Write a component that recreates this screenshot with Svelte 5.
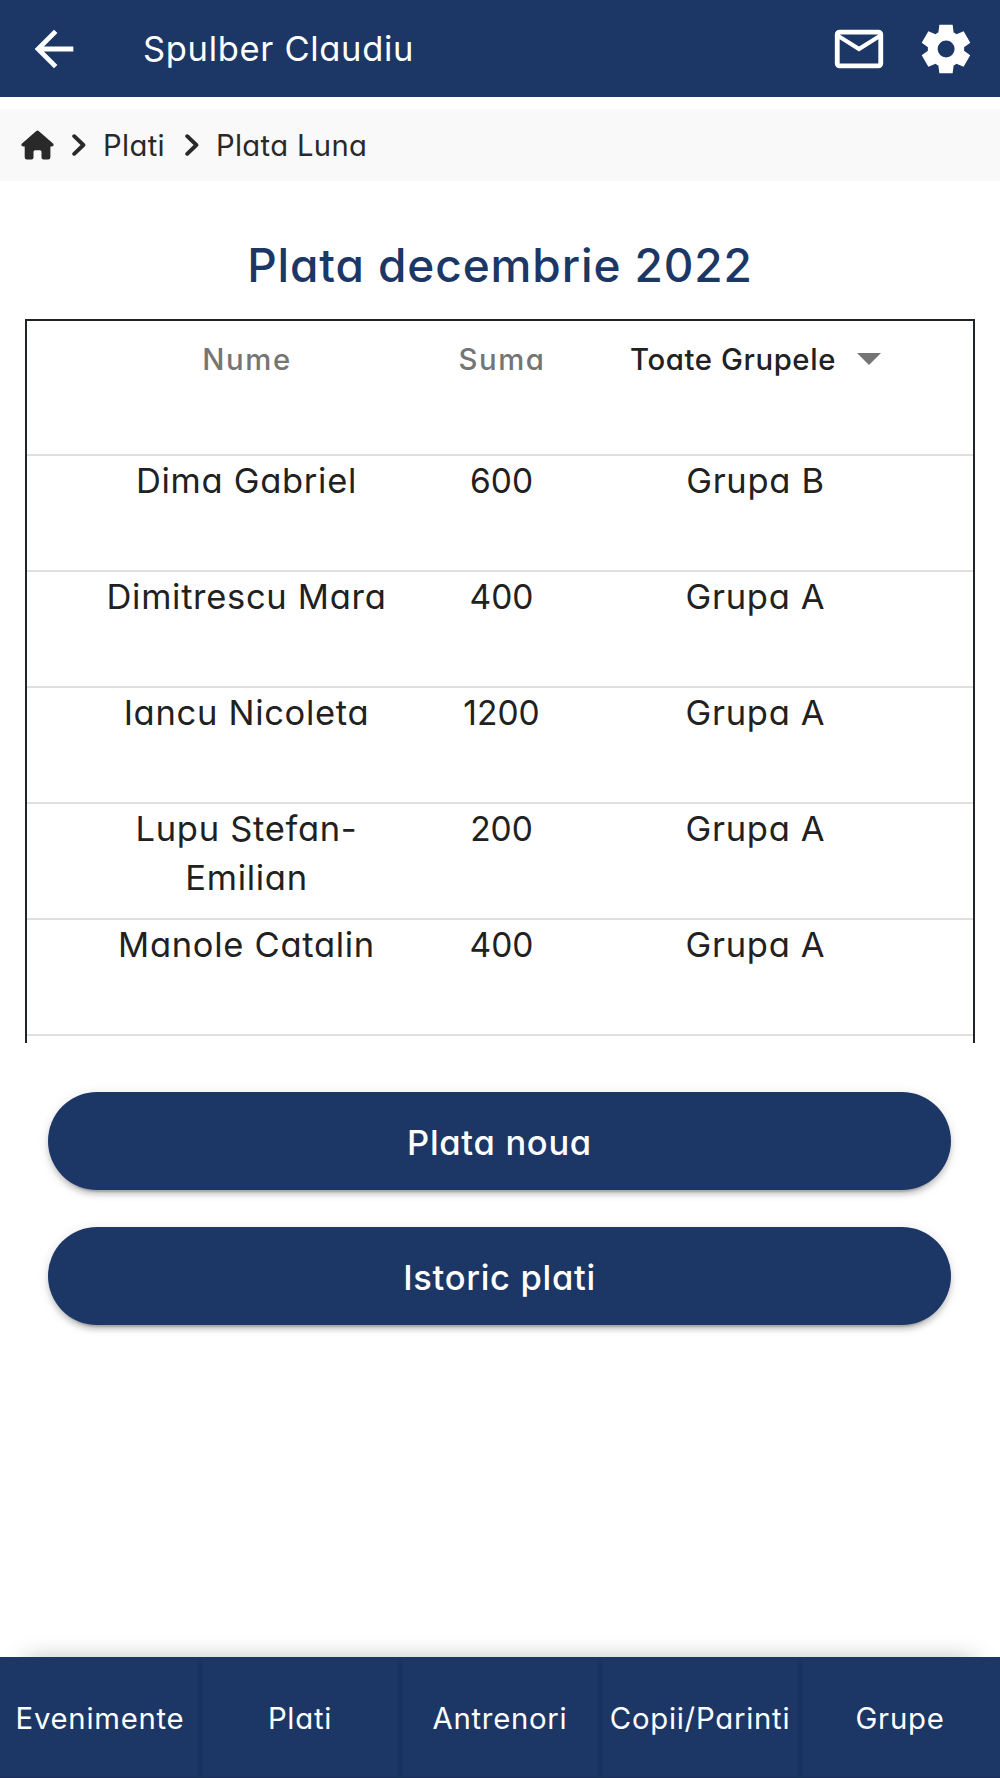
<script>
	const user = 'Spulber Claudiu'
	const title = 'Plata decembrie 2022'

	const payments = [
		{ name: 'Dima Gabriel', amount: 600, group: 'Grupa B' },
		{ name: 'Dimitrescu Mara', amount: 400, group: 'Grupa A' },
		{ name: 'Iancu Nicoleta', amount: 1200, group: 'Grupa A' },
		{ name: 'Lupu Stefan-Emilian', amount: 200, group: 'Grupa A' },
		{ name: 'Manole Catalin', amount: 400, group: 'Grupa A' }
	]

	const tabs = ['Evenimente', 'Plati', 'Antrenori', 'Copii/Parinti', 'Grupe']
</script>

{#snippet chevron()}
	<svg class="chevron" viewBox="0 0 14 22">
		<path d="M2.2 2.2 11.4 11 2.2 19.8" />
	</svg>
{/snippet}

<div class="app">
	<header>
		<button class="icon" aria-label="Inapoi">
			<svg viewBox="0 0 24 24"><path d="M20 11H7.83l5.59-5.59L12 4l-8 8 8 8 1.41-1.41L7.83 13H20z" /></svg>
		</button>
		<span class="user">{user}</span>
		<button class="icon" aria-label="Mesaje">
			<svg viewBox="0 0 24 24"><path d="M4 20q-.825 0-1.412-.587Q2 18.825 2 18V6q0-.825.588-1.412Q3.175 4 4 4h16q.825 0 1.413.588Q22 5.175 22 6v12q0 .825-.587 1.413Q20.825 20 20 20Zm8-7L4 8v10h16V8Zm0-2 8-5H4ZM4 8V6v12Z" /></svg>
		</button>
		<button class="icon" aria-label="Setari">
			<svg viewBox="0 0 24 24"><path d="m9.25 22-.4-3.2q-.325-.125-.612-.3-.288-.175-.563-.375L4.7 19.375l-2.75-4.75 2.575-1.95Q4.5 12.5 4.5 12.337v-.675q0-.162.025-.337L1.95 9.375l2.75-4.75 2.975 1.25q.275-.2.575-.375.3-.175.6-.3l.4-3.2h5.5l.4 3.2q.325.125.613.3.287.175.562.375l2.975-1.25 2.75 4.75-2.575 1.95q.025.175.025.337v.675q0 .163-.05.338l2.575 1.95-2.75 4.75-2.95-1.25q-.275.2-.575.375-.3.175-.6.3l-.4 3.2Zm2.8-6.5q1.45 0 2.475-1.025Q15.55 13.45 15.55 12q0-1.45-1.025-2.475Q13.5 8.5 12.05 8.5q-1.475 0-2.488 1.025Q8.55 10.55 8.55 12q0 1.45 1.012 2.475Q10.575 15.5 12.05 15.5Z" /></svg>
		</button>
	</header>

	<nav class="breadcrumb">
		<svg class="home" viewBox="0 0 33 30">
			<path d="M15.3.9q1.2-1 2.400 0L32 13.600q1 1 .5 2-.4.8-1.600.8h-1.500v10.800q0 2.300-2.300 2.300h-4.600q-2 0-2-2v-5.700q0-1.600-1.600-1.600h-4.800q-1.600 0-1.600 1.600v5.700q0 2-2 2H6q-2.300 0-2.300-2.300V16.400H2.100Q.9 16.400.5 15.600 0 14.600 1 13.600Z" />
		</svg>
		{@render chevron()}
		<span class="crumb">Plati</span>
		{@render chevron()}
		<span class="crumb">Plata Luna</span>
	</nav>

	<h1>{title}</h1>

	<div class="table">
		<div class="row head">
			<span class="label">Nume</span>
			<span class="label">Suma</span>
			<div class="select">
				<span>Toate Grupele</span>
				<i class="arrow"></i>
			</div>
		</div>
		{#each payments as payment}
			<div class="row">
				<span>{payment.name}</span>
				<span class="amount">{payment.amount}</span>
				<span>{payment.group}</span>
			</div>
		{/each}
	</div>

	<div class="actions">
		<button>Plata noua</button>
		<button>Istoric plati</button>
	</div>

	<nav class="tabs">
		{#each tabs as tab}
			<div class="tab">{tab}</div>
		{/each}
	</nav>
</div>

<style>
	:global(body) {
		margin: 0;
		background: #fff;
	}

	.app {
		display: flex;
		flex-direction: column;
		height: 1778px;
		overflow: hidden;
		font-family: Inter, "Open Sans", sans-serif;
		font-feature-settings: "cv11";
		color: #212121;
	}

	button {
		border: 0;
		padding: 0;
		font: inherit;
		color: #fff;
		background: none;
	}

	svg {
		display: block;
		flex: none;
	}

	header {
		display: flex;
		align-items: center;
		box-sizing: border-box;
		height: 97px;
		padding: 0 25px;
		background: #1c3766;
		color: #fff;
	}

	.icon svg {
		width: 58px;
		height: 58px;
		fill: currentColor;
	}

	.icon + .icon {
		margin-left: 29px;
	}

	.user {
		flex: 1;
		margin-left: 60px;
		font-size: 34.5px;
		letter-spacing: 0.68px;
	}

	.breadcrumb {
		display: flex;
		align-items: center;
		box-sizing: border-box;
		height: 72px;
		margin-top: 12px;
		padding-left: 21px;
		background: #f9f9f9;
	}

	.home {
		width: 33px;
		height: 30px;
		margin-right: 18px;
		fill: #292929;
	}

	.chevron {
		width: 14px;
		height: 22px;
		fill: none;
		stroke: #292929;
		stroke-width: 3.9;
		stroke-linecap: round;
		stroke-linejoin: round;
	}

	.crumb {
		margin: 1px 20px 0 17px;
		font-size: 29.2px;
		letter-spacing: 0.35px;
		color: #292929;
	}

	h1 {
		margin: 54px 0 24px;
		font-size: 46px;
		font-weight: 500;
		line-height: 60px;
		letter-spacing: 0.9px;
		text-align: center;
		color: #1c3766;
	}

	.table {
		box-sizing: border-box;
		height: 724px;
		margin: 0 25px;
		border: 2px solid #212427;
		border-bottom: 0;
		overflow: hidden;
	}

	.row {
		display: grid;
		grid-template-columns: 290px 220px 288px;
		align-items: start;
		box-sizing: border-box;
		height: 116px;
		padding: 1px 0 0 74.5px;
		border-bottom: 2px solid #e0e0e0;
		font-size: 34.5px;
		line-height: 48.6px;
		letter-spacing: 0.7px;
		text-align: center;
	}

	.row .amount {
		font-size: 33.5px;
		letter-spacing: 0;
	}

	.head {
		height: 135px;
		padding-top: 15px;
		font-size: 29.3px;
		font-weight: 500;
	}

	.label {
		padding-left: 1px;
		letter-spacing: 1.6px;
		color: #757575;
	}

	.select {
		display: flex;
		justify-content: center;
		align-items: center;
		gap: 21px;
		letter-spacing: 0.6px;
	}

	.arrow {
		margin-bottom: 2px;
		border: 12px solid transparent;
		border-top-color: #757575;
		border-bottom: 0;
	}

	.actions {
		display: flex;
		flex-direction: column;
		gap: 37px;
		margin: 49px 49px 0 48px;
	}

	.actions button {
		height: 98px;
		padding-top: 2px;
		border-radius: 49px;
		background: #1c3766;
		box-shadow: 0 7px 2px -5px rgba(0, 0, 0, 0.2), 0 5px 5px rgba(0, 0, 0, 0.14), 0 2px 12px rgba(0, 0, 0, 0.12);
		font-size: 34.5px;
		font-weight: 500;
		letter-spacing: 0.7px;
	}

	.tabs {
		display: grid;
		grid-template-columns: repeat(5, 1fr);
		height: 121px;
		margin-top: auto;
		background: #1c3766;
		box-shadow: 0 -24px 24px -26px rgba(0, 0, 0, 0.27), inset 0 -1px #18305a;
		color: #fff;
	}

	.tab {
		position: relative;
		display: flex;
		justify-content: center;
		align-items: center;
		padding-top: 2px;
		font-size: 29.3px;
		letter-spacing: 0.75px;
	}

	.tab:not(:last-child)::after {
		content: '';
		position: absolute;
		top: 4px;
		right: -4px;
		bottom: 0;
		width: 8px;
		background: linear-gradient(to right, transparent, #18305d, transparent);
	}
</style>
